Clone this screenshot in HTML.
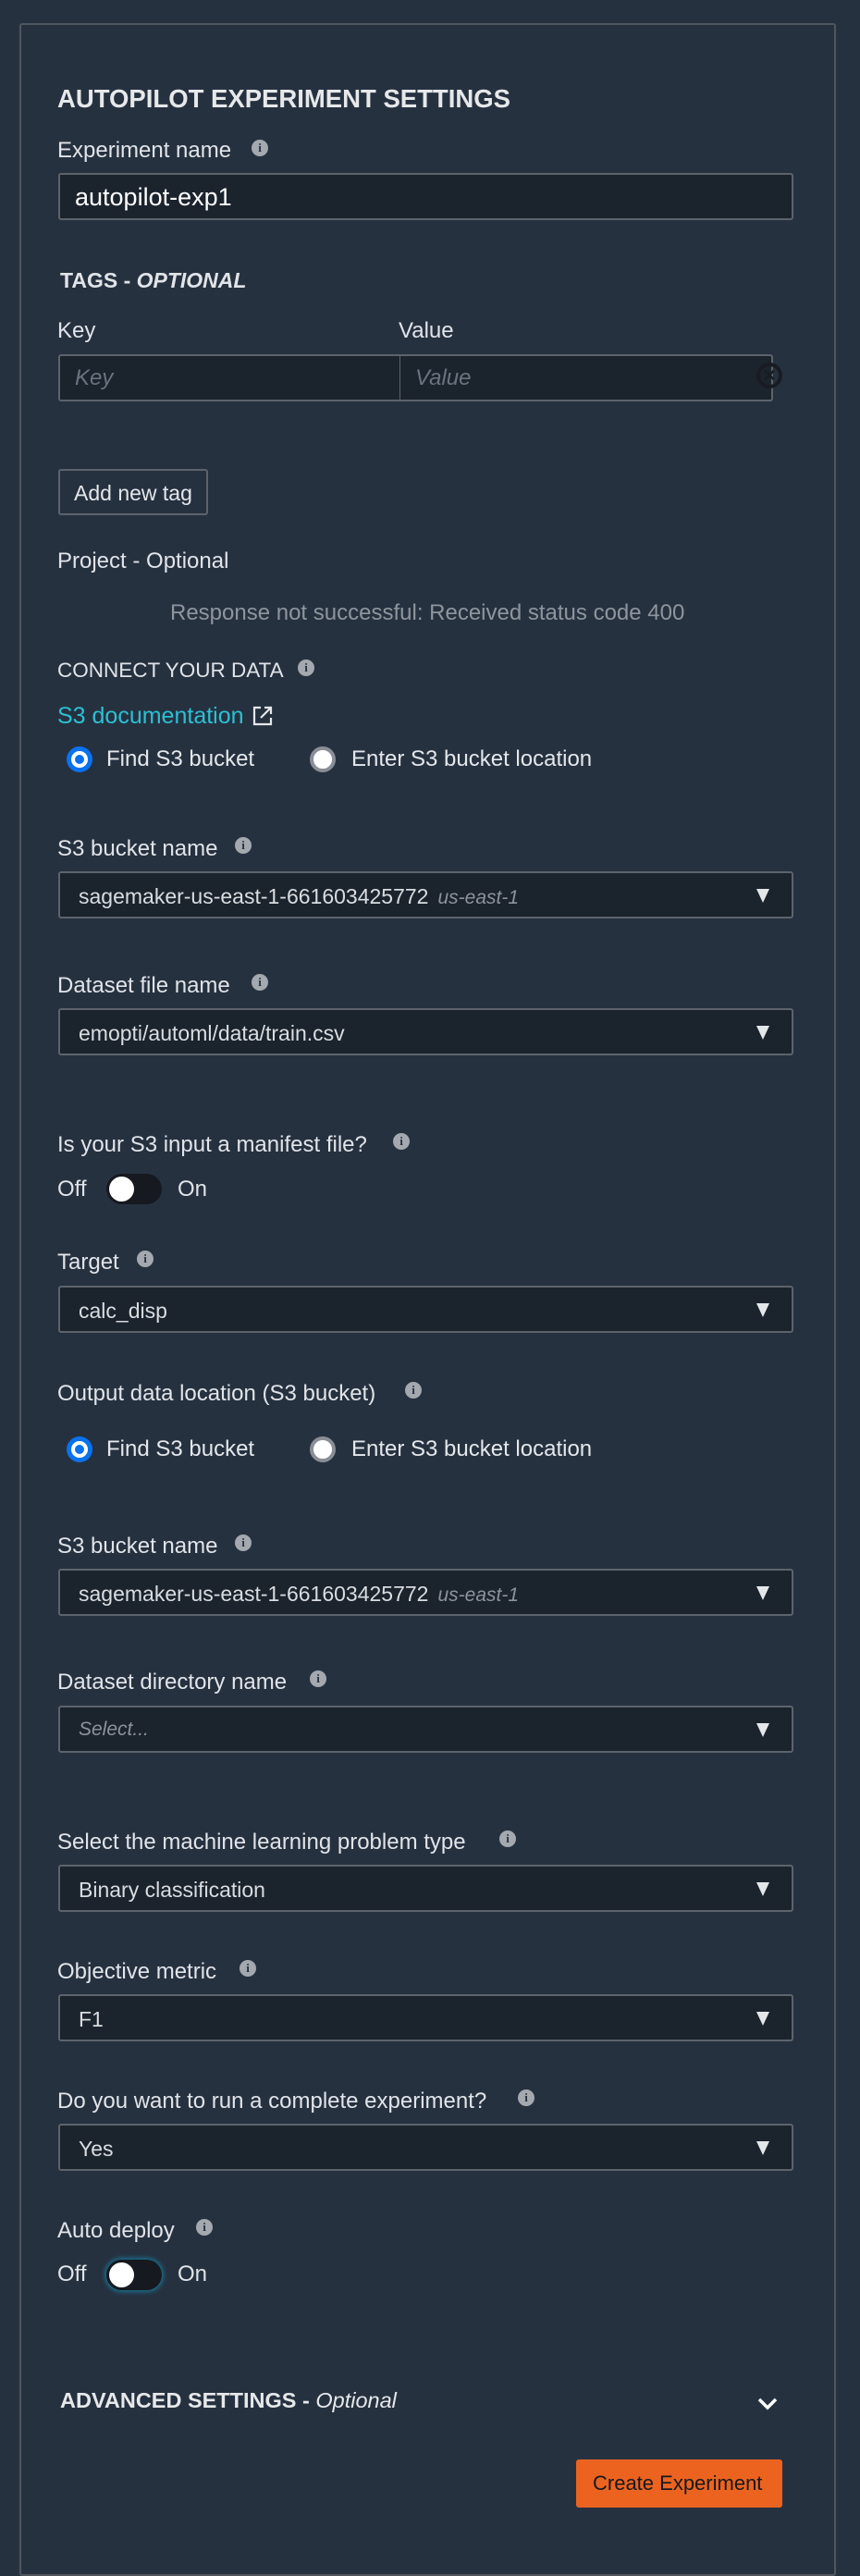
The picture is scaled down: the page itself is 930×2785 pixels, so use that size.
<!DOCTYPE html>
<html><head><meta charset="utf-8"><style>
*{margin:0;padding:0;box-sizing:border-box}
html,body{width:930px;height:2740px;background:#263140;overflow:hidden;font-family:"Liberation Sans",sans-serif;color:#e4e7ea}
.box{position:absolute;left:21px;top:25px;width:883px;height:2760px;border:2px solid #50565e;border-radius:3px}
.t{position:absolute;white-space:nowrap;line-height:1}
.lbl{font-size:24px;color:#e1e4e8}
.info{position:absolute;width:18px;height:18px;border-radius:50%;background:#a4a9b0;color:#263140;font:bold 13px/18px "Liberation Serif",serif;text-align:center}
.inp{position:absolute;left:63px;width:795px;height:51px;background:#1b232d;border:2px solid #5d636b;border-radius:3px}
.sel .v{position:absolute;left:20px;top:12px;font-size:23px;color:#d9dde0;white-space:nowrap}
.sel .a{position:absolute;right:24px;top:17px;width:0;height:0;border-left:7px solid transparent;border-right:7px solid transparent;border-top:15px solid #e4e7ea}
.reg{font-style:italic;color:#8c939b;margin-left:10px;font-size:21px}
.r1{position:absolute;width:28px;height:28px;border-radius:50%;background:#0a72ee}
.r1:after{content:"";position:absolute;left:5px;top:5px;width:18px;height:18px;border-radius:50%;background:#0a72ee;border:4px solid #fff;box-sizing:border-box}
.r2{position:absolute;width:28px;height:28px;border-radius:50%;background:#fff;border:4px solid #8a8e96}
.tog{position:absolute;left:115px;width:60px;height:33px;border-radius:17px;background:#16191f}
.tog:after{content:"";position:absolute;left:3px;top:3px;width:27px;height:27px;border-radius:50%;background:#fff}
.rt{font-size:24px}
</style></head><body>
<div class="box"></div>

<div class="t" style="left:62px;top:93px;font-size:27.5px;font-weight:bold;color:#e6e8ea">AUTOPILOT EXPERIMENT SETTINGS</div>

<div class="t lbl" style="left:62px;top:151px">Experiment name</div>
<div class="info" style="left:272px;top:151px">i</div>
<div class="inp" style="top:187px"><span class="t" style="left:16px;top:11px;font-size:27px;color:#fff">autopilot-exp1</span></div>

<div class="t" style="left:65px;top:292px;font-size:23px;font-weight:bold;color:#e1e4e8">TAGS - <i>OPTIONAL</i></div>
<div class="t lbl" style="left:62px;top:346px">Key</div>
<div class="t lbl" style="left:431px;top:346px">Value</div>
<div class="inp" style="top:383px;width:370px;border-right:1px solid #5d636b;border-radius:3px 0 0 3px"><span class="t" style="left:16px;top:12px;font-size:24px;font-style:italic;color:#6b7380">Key</span></div>
<div class="inp" style="top:383px;left:432px;width:404px;border-left:1px solid #5d636b;border-radius:0 3px 3px 0"><span class="t" style="left:16px;top:12px;font-size:24px;font-style:italic;color:#6b7380">Value</span></div>
<div style="position:absolute;left:818px;top:392px;width:28px;height:28px;border-radius:50%;border:4px solid #181c22;color:#181c22;font:bold 18px/20px 'Liberation Sans',sans-serif;text-align:center">✕</div>

<div style="position:absolute;left:63px;top:507px;width:162px;height:50px;border:2px solid #5d636b;border-radius:3px"><span class="t" style="left:15px;top:13px;font-size:23px;color:#e4e7ea">Add new tag</span></div>

<div class="t lbl" style="left:62px;top:595px">Project - Optional</div>
<div class="t" style="left:184px;top:651px;font-size:24px;color:#8e959d">Response not successful: Received status code 400</div>

<div class="t" style="left:62px;top:714px;font-size:22.5px;color:#e1e4e8">CONNECT YOUR DATA</div>
<div class="info" style="left:322px;top:713px">i</div>
<div class="t" style="left:62px;top:762px;font-size:25px;color:#2cc0d3">S3 documentation</div>
<svg style="position:absolute;left:272px;top:762px" width="24" height="24" viewBox="0 0 24 24" fill="none" stroke="#e4e7ea" stroke-width="2.2"><path d="M10 3H3v18h18v-7"/><path d="M14 3h7v7M21 3L10 14"/></svg>

<div class="r1" style="left:72px;top:807px"></div>
<div class="t rt" style="left:115px;top:809px">Find S3 bucket</div>
<div class="r2" style="left:335px;top:807px"></div>
<div class="t rt" style="left:380px;top:809px">Enter S3 bucket location</div>

<div class="t lbl" style="left:62px;top:906px">S3 bucket name</div>
<div class="info" style="left:254px;top:905px">i</div>
<div class="inp sel" style="top:942px"><span class="v">sagemaker-us-east-1-661603425772<span class="reg">us-east-1</span></span><span class="a"></span></div>

<div class="t lbl" style="left:62px;top:1054px">Dataset file name</div>
<div class="info" style="left:272px;top:1053px">i</div>
<div class="inp sel" style="top:1090px"><span class="v">emopti/automl/data/train.csv</span><span class="a"></span></div>

<div class="t lbl" style="left:62px;top:1226px">Is your S3 input a manifest file?</div>
<div class="info" style="left:425px;top:1225px">i</div>
<div class="t lbl" style="left:62px;top:1274px">Off</div>
<div class="tog" style="top:1269px"></div>
<div class="t lbl" style="left:192px;top:1274px">On</div>

<div class="t lbl" style="left:62px;top:1353px">Target</div>
<div class="info" style="left:148px;top:1352px">i</div>
<div class="inp sel" style="top:1390px"><span class="v">calc_disp</span><span class="a"></span></div>

<div class="t lbl" style="left:62px;top:1495px">Output data location (S3 bucket)</div>
<div class="info" style="left:438px;top:1494px">i</div>
<div class="r1" style="left:72px;top:1553px"></div>
<div class="t rt" style="left:115px;top:1555px">Find S3 bucket</div>
<div class="r2" style="left:335px;top:1553px"></div>
<div class="t rt" style="left:380px;top:1555px">Enter S3 bucket location</div>

<div class="t lbl" style="left:62px;top:1660px">S3 bucket name</div>
<div class="info" style="left:254px;top:1659px">i</div>
<div class="inp sel" style="top:1696px"><span class="v">sagemaker-us-east-1-661603425772<span class="reg">us-east-1</span></span><span class="a"></span></div>

<div class="t lbl" style="left:62px;top:1807px">Dataset directory name</div>
<div class="info" style="left:335px;top:1806px">i</div>
<div class="inp sel" style="top:1844px"><span class="v" style="font-style:italic;color:#8c939b;font-size:21px">Select...</span><span class="a"></span></div>

<div class="t lbl" style="left:62px;top:1980px">Select the machine learning problem type</div>
<div class="info" style="left:540px;top:1979px">i</div>
<div class="inp sel" style="top:2016px"><span class="v">Binary classification</span><span class="a"></span></div>

<div class="t lbl" style="left:62px;top:2120px">Objective metric</div>
<div class="info" style="left:259px;top:2119px">i</div>
<div class="inp sel" style="top:2156px"><span class="v">F1</span><span class="a"></span></div>

<div class="t lbl" style="left:62px;top:2260px">Do you want to run a complete experiment?</div>
<div class="info" style="left:560px;top:2259px">i</div>
<div class="inp sel" style="top:2296px"><span class="v">Yes</span><span class="a"></span></div>

<div class="t lbl" style="left:62px;top:2400px">Auto deploy</div>
<div class="info" style="left:212px;top:2399px">i</div>
<div class="t lbl" style="left:62px;top:2447px">Off</div>
<div class="tog" style="top:2443px;box-shadow:0 0 5px 2px #1a6f8c"></div>
<div class="t lbl" style="left:192px;top:2447px">On</div>

<div class="t" style="left:65px;top:2584px;font-size:23.5px;font-weight:bold;color:#e6e8ea">ADVANCED SETTINGS - <i style="font-weight:normal">Optional</i></div>
<svg style="position:absolute;left:819px;top:2591px" width="22" height="16" viewBox="0 0 22 16" fill="none" stroke="#fff" stroke-width="3.5"><path d="M2 3l9 9 9-9"/></svg>

<div style="position:absolute;left:623px;top:2659px;width:223px;height:52px;background:#ec6320;border-radius:3px"><span class="t" style="left:18px;top:15px;font-size:22px;color:#16191f">Create Experiment</span></div>
</body></html>
